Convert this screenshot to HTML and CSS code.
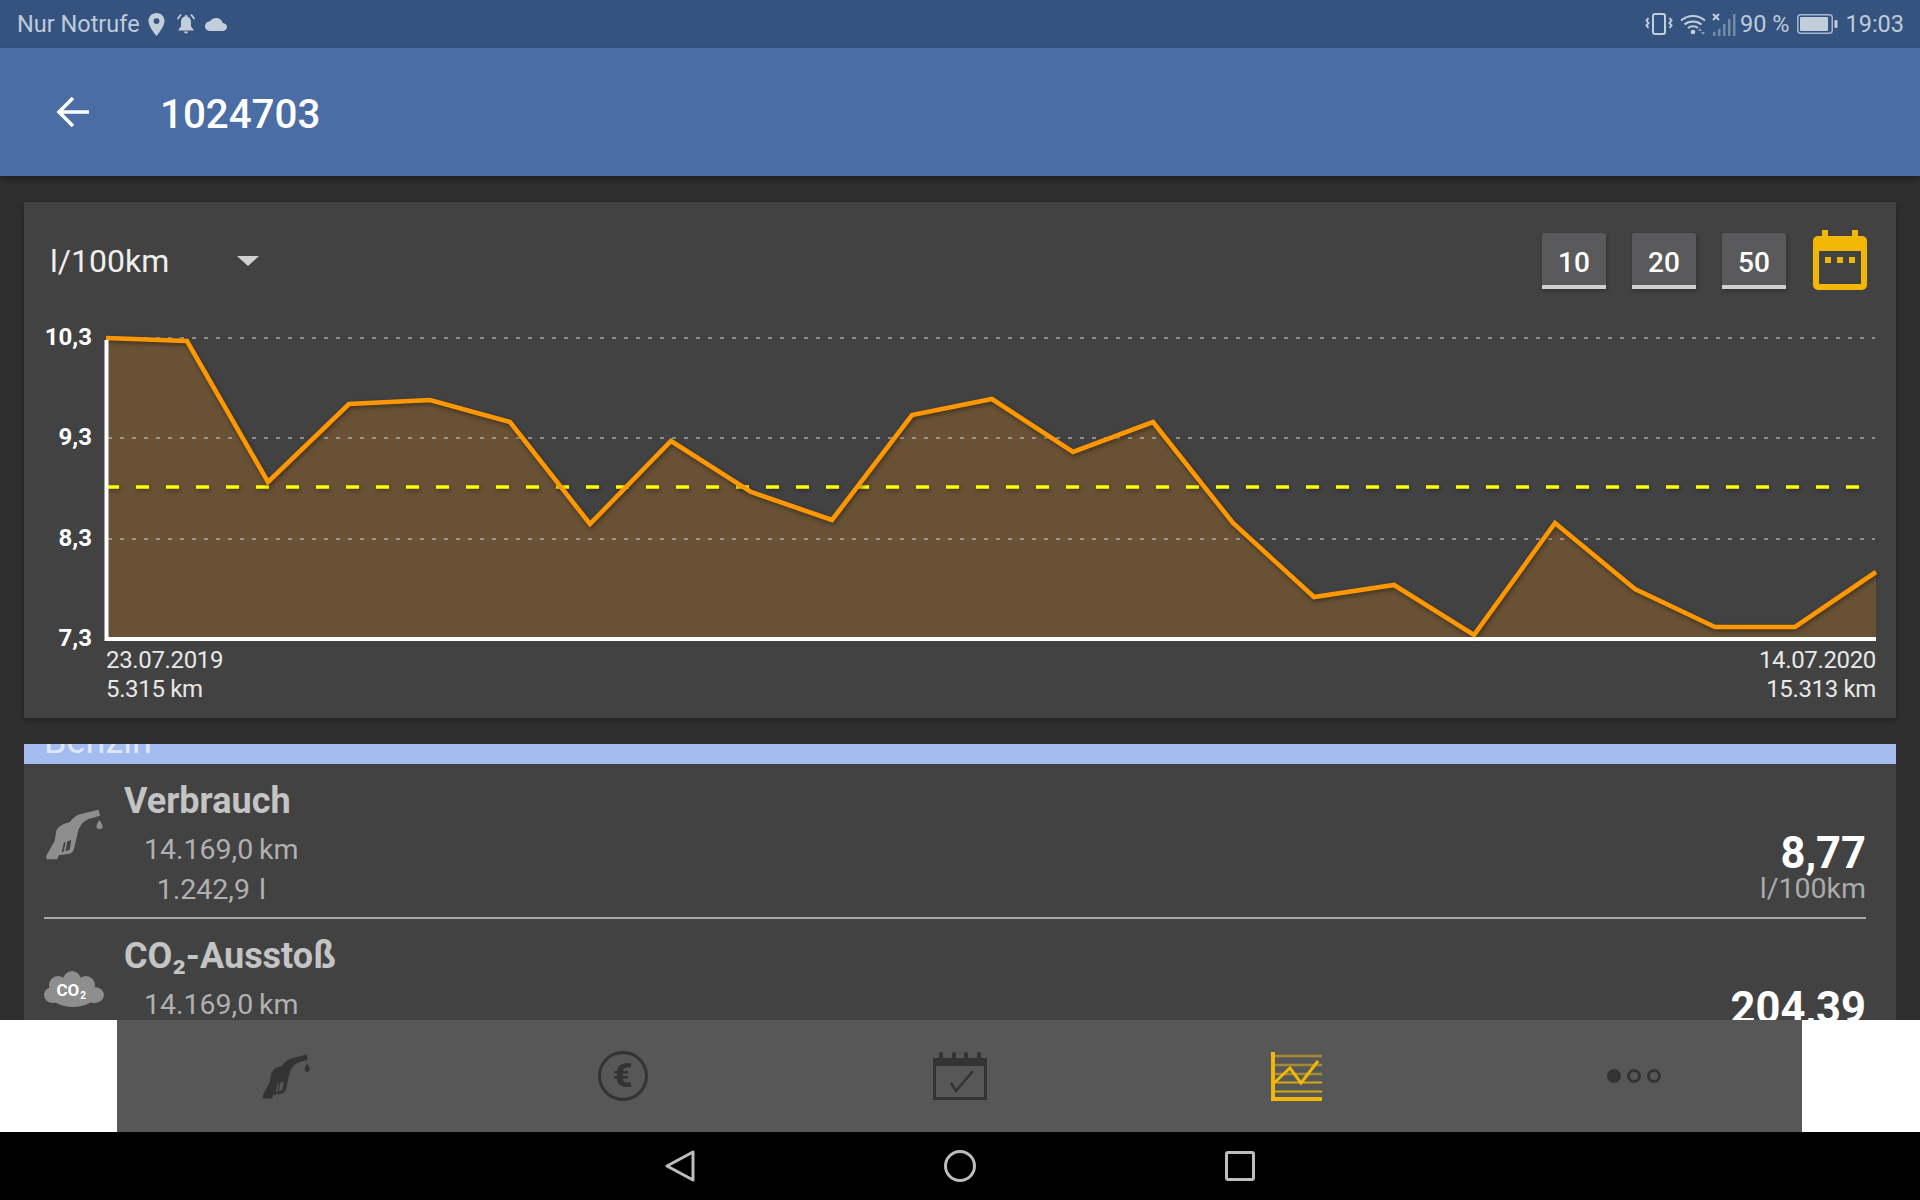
FILE: index.html
```html
<!DOCTYPE html>
<html lang="de">
<head>
<meta charset="utf-8">
<title>1024703</title>
<link rel="stylesheet" href="styles.css">
</head>
<body>
<div class="screen">
  <header class="status">
    <div class="status-side">
      <span class="status-text">Nur Notrufe</span>
      <svg class="ic-pin" viewBox="5 2 14 20"><path fill-rule="evenodd" d="M12 2C8.1 2 5 5.1 5 9c0 5.2 7 13 7 13s7-7.8 7-13c0-3.9-3.1-7-7-7zm0 9.5a2.5 2.5 0 1 1 0-5 2.5 2.5 0 0 1 0 5z"/></svg>
      <svg class="ic-bell" viewBox="0 0 22 22"><path d="M11 3.5c-3.6 0-5 2.8-5 5.5v4.5L3.6 16.600v1h14.800v-1L16 13.500V9c0-2.700-1.400-5.500-5-5.500z"/><circle cx="11" cy="3.500" r="1.400"/><path d="M9 18.500h4a2 2 0 0 1-4 0z"/><path class="ic-arc" d="M6 1.500 2.500 6M16 1.500 19.500 6"/></svg>
      <svg class="ic-cloud" viewBox="0 4 24 16" preserveAspectRatio="none"><path d="M19.350 10.040C18.670 6.590 15.640 4 12 4 9.110 4 6.600 5.640 5.350 8.040 2.340 8.360 0 10.910 0 14c0 3.310 2.690 6 6 6h13c2.760 0 5-2.240 5-5 0-2.640-2.050-4.780-4.650-4.960z"/></svg>
    </div>
    <div class="status-side">
      <svg class="ic-vib" viewBox="0 0 28 22"><rect class="ic-line" x="8" y="1" width="12" height="20" rx="2"/><path class="ic-line" d="M3.500 5 1.500 7.500l2 2.500-2 2.500 2 2.500M24.500 5l2 2.500-2 2.500 2 2.500-2 2.500"/></svg>
      <svg class="ic-wifi" viewBox="0 0 26 22"><path class="ic-line" d="M1 7.500c7-6 17-6 24 0M4.500 11.500c4.800-4 12.200-4 17 0M8 15c2.800-2.300 7.200-2.300 10 0"/><circle cx="13" cy="19" r="2.300"/><path d="m20 15 2 3h-4zM23 22l-2-3h4z" opacity=".6"/></svg>
      <svg class="ic-signal" viewBox="0 0 24 23"><path class="ic-x" d="m1 1 6 6M7 1 1 7"/><g class="ic-dim"><rect x="1" y="19" width="2.500" height="4"/><rect x="6" y="16" width="2.500" height="7"/><rect x="11" y="11" width="2.500" height="12"/><rect x="16" y="6" width="2.500" height="17"/><rect x="21" y="1" width="2.500" height="22"/></g></svg>
      <span class="status-text">90 %</span>
      <svg class="ic-batt" viewBox="0 0 41 20"><rect class="ic-batt-box" x=".75" y=".75" width="34.500" height="18.500" rx="3"/><rect x="3" y="3" width="28" height="14" rx="1"/><rect x="37.500" y="6" width="3" height="8" rx="1"/></svg>
      <span class="status-text">19:03</span>
    </div>
  </header>

  <div class="appbar">
    <svg class="ic-back" viewBox="0 0 33 32"><path d="M33 16H3M17 2 3 16l14 14"/></svg>
    <h1 class="title">1024703</h1>
  </div>

  <main class="content">
    <section class="card chart-card">
      <div class="toolbar">
        <div class="select"><span>l/100km</span><i class="caret"></i></div>
        <div class="actions">
          <button class="range">10</button>
          <button class="range">20</button>
          <button class="range">50</button>
          <svg class="ic-cal" viewBox="0 0 54 60"><path fill-rule="evenodd" d="M9 0h6v6h24V0h6v6h4a5 5 0 0 1 5 5v44a5 5 0 0 1-5 5H5a5 5 0 0 1-5-5V11a5 5 0 0 1 5-5h4zM6 21v33h42V21z"/><rect x="12" y="27" width="6" height="6"/><rect x="24" y="27" width="6" height="6"/><rect x="36" y="27" width="6" height="6"/></svg>
        </div>
      </div>
      <svg class="chart" viewBox="24 320 1872 324">
        <polygon class="area" points="106,338 187,341 268,482 349,404 430,400 510,422 590,524 671,441 751,492 832,520 912,415 992,399 1073,452 1153,422 1233,523 1314,597 1394,585 1474,635 1555,523 1635,589 1715,627 1795,627 1876,572 1876,638 106,638"/>
        <path class="grid" d="M108 338H1875M108 438H1875M108 539H1875"/>
        <path class="mean" d="M106 487H1862"/>
        <polyline class="line" points="106,338 187,341 268,482 349,404 430,400 510,422 590,524 671,441 751,492 832,520 912,415 992,399 1073,452 1153,422 1233,523 1314,597 1394,585 1474,635 1555,523 1635,589 1715,627 1795,627 1876,572"/>
        <path class="axis" d="M106.500 340V639H1876"/>
        <g class="ylabels">
          <text x="92" y="345">10,3</text>
          <text x="92" y="445">9,3</text>
          <text x="92" y="546">8,3</text>
          <text x="92" y="646">7,3</text>
        </g>
      </svg>
      <div class="range-labels">
        <div>23.07.2019<br>5.315 km</div>
        <div class="range-end">14.07.2020<br>15.313 km</div>
      </div>
    </section>

    <section class="group">
      <div class="group-head"><span>Benzin</span></div>
      <div class="card rows">
        <article class="row row-first">
          <div class="row-icon">
            <svg class="ic-pump" viewBox="130 262 180 156"><path fill-rule="evenodd" d="M294 267l4 18-34 10q-18 6-30 30l-14 60q-4 13-18 15l-28 4-4 12h-33v-11l25-45 5-30q10-20 40-25 15-20 31-24zM190 365l-7 30 6-2 6-28zM200 362l-6 30 13-4 5-30zM296 298q12 17 10 22a10 10 0 0 1-19-2q0-6 9-20z"/></svg>
          </div>
          <div class="row-main">
            <h2 class="row-title">Verbrauch</h2>
            <div class="pairs">
              <span class="num">14.169,0</span><span>km</span>
              <span class="num">1.242,9</span><span>l</span>
            </div>
          </div>
          <div class="row-value"><strong>8,77</strong><span>l/100km</span></div>
        </article>
        <hr class="divider">
        <article class="row">
          <div class="row-icon">
            <svg class="ic-co2" viewBox="0 0 60 36"><circle cx="28" cy="9" r="9"/><circle cx="14" cy="14" r="9"/><circle cx="42" cy="14" r="9"/><ellipse cx="9" cy="24" rx="9" ry="8"/><ellipse cx="50" cy="24" rx="10" ry="8"/><ellipse cx="29" cy="24" rx="22" ry="12"/><text class="co2-text" x="12.500" y="25">CO<tspan class="co2-sub" dx="1" dy="3">2</tspan></text></svg>
          </div>
          <div class="row-main">
            <h2 class="row-title">CO₂-Ausstoß</h2>
            <div class="pairs">
              <span class="num">14.169,0</span><span>km</span>
            </div>
          </div>
          <div class="row-value"><strong>204,39</strong></div>
        </article>
      </div>
    </section>
  </main>

  <nav class="tabs">
    <div class="tabs-inner">
      <div class="tab">
        <svg class="tab-pump" viewBox="130 262 180 156" preserveAspectRatio="none"><path fill-rule="evenodd" d="M294 267l4 18-34 10q-18 6-30 30l-14 60q-4 13-18 15l-28 4-4 12h-33v-11l25-45 5-30q10-20 40-25 15-20 31-24zM190 365l-7 30 6-2 6-28zM200 362l-6 30 13-4 5-30zM296 298q12 17 10 22a10 10 0 0 1-19-2q0-6 9-20z"/></svg>
      </div>
      <div class="tab">
        <div class="euro">€</div>
      </div>
      <div class="tab">
        <svg class="tab-cal" viewBox="0 0 54 48"><path class="cal-fill" d="M0 6h54v8H0z"/><path class="cal-rings" d="M8 2v7M21 2v7M33 2v7M46 2v7"/><path class="cal-box" d="M1.500 12v34.500h51V12"/><path class="cal-check" d="M18 31l5 8 17-20"/></svg>
      </div>
      <div class="tab">
        <svg class="tab-chart" viewBox="0 0 51 49"><path class="tc-grid" d="M3 4H51M3 13H51M3 22H51"/><path class="tc-grid2" d="M3 30.500H51M3 39.500H51"/><path class="tc-bold" d="M2 0V49M2 47H51"/><path class="tc-line" d="M3 31 19 16l11 15 17-22"/></svg>
      </div>
      <div class="tab">
        <div class="dots"><i class="dot on"></i><i class="dot"></i><i class="dot"></i></div>
      </div>
    </div>
  </nav>

  <footer class="sysnav">
    <div class="sys"><svg class="sys-ic" width="30" height="32" viewBox="0 0 30 32"><path d="M28 2v28L2 16z"/></svg></div>
    <div class="sys"><svg class="sys-ic" width="32" height="32" viewBox="0 0 32 32"><circle cx="16" cy="16" r="14.500"/></svg></div>
    <div class="sys"><svg class="sys-ic" width="30" height="30" viewBox="0 0 30 30"><rect x="1.500" y="1.500" width="27" height="27" rx="1.500"/></svg></div>
  </footer>
</div>
</body>
</html>
```

FILE: styles.css
```css
* { box-sizing: border-box; }
html, body { margin: 0; padding: 0; background: #000; }
body { font-family: Roboto, "Liberation Sans", sans-serif; }
.screen { width: 1920px; height: 1200px; display: flex; flex-direction: column; overflow: hidden; }

/* status bar */
.status { height: 48px; flex: none; background: #34537f; display: flex; justify-content: space-between; align-items: center; padding: 0 16px 0 17px; color: #bfcbdb; }
.status-side { display: flex; align-items: center; }
.status-text { font-size: 23.500px; line-height: 28px; }
.status svg { fill: #c3cedd; display: block; }
.ic-pin { width: 17px; height: 23px; margin-left: 8px; }
.ic-bell { width: 22px; height: 22px; margin-left: 10px; }
.ic-arc { fill: none; stroke: #c3cedd; stroke-width: 1.800; }
.ic-cloud { width: 22px; height: 13px; margin-left: 8px; }
.ic-line { fill: none; stroke: #c3cedd; stroke-width: 2; }
.ic-vib { width: 28px; height: 22px; }
.ic-wifi { width: 26px; height: 22px; margin-left: 7px; }
.ic-signal { width: 24px; height: 23px; margin-left: 6px; }
.ic-x { fill: none; stroke: #c3cedd; stroke-width: 2; }
.ic-dim { opacity: .45; }
.ic-signal + .status-text { margin-left: 4px; }
.ic-batt { width: 41px; height: 20px; margin: 0 7px 0 8px; }
.ic-batt-box { fill: none; stroke: #a9b8cd; stroke-width: 1.500; }

/* app bar */
.appbar { height: 128px; flex: none; background: #4a6da5; display: flex; align-items: center; padding-left: 56px; box-shadow: 0 3px 6px rgba(0, 0, 0, .35); position: relative; z-index: 2; }
.ic-back { width: 33px; height: 32px; fill: none; stroke: #fff; stroke-width: 3.500; display: block; }
.title { margin: 5px 0 0 71px; font-size: 40.300px; font-weight: 500; color: #fff; line-height: 48px; }

/* content */
.content { flex: 1; min-height: 0; overflow: hidden; background: #2f2f2f; padding: 26px 24px 0; display: flex; flex-direction: column; gap: 26px; }
.card { background: #424242; }
.chart-card { height: 516px; flex: none; box-shadow: 0 2px 5px rgba(0, 0, 0, .3); }
.toolbar { height: 118px; display: flex; align-items: center; justify-content: space-between; padding: 0 29px 0 26px; }
.select { display: flex; align-items: center; font-size: 32px; color: #efefef; }
.caret { width: 0; height: 0; border-left: 11px solid transparent; border-right: 11px solid transparent; border-top: 10px solid #d0d0d0; margin-left: 68px; }
.actions { display: flex; align-items: center; gap: 26px; }
.range { width: 64px; height: 56px; border: 0; border-bottom: 4px solid #cfcfcf; border-radius: 3px 3px 0 0; background: #5a5a5c; color: #fff; font: 500 28px Roboto, sans-serif; padding: 6px 0 0; box-shadow: 1px 2px 4px rgba(0, 0, 0, .25); }
.ic-cal { width: 54px; height: 60px; fill: #f2b705; display: block; margin: -2px 0 0 1px; }

.chart { display: block; width: 1872px; height: 324px; overflow: visible; }
.area { fill: #685135; }
.grid { fill: none; stroke: #a8a8a8; stroke-opacity: .75; stroke-width: 2; stroke-dasharray: 4 8; }
.mean { fill: none; stroke: #ffff00; stroke-width: 3.500; stroke-dasharray: 13 17; filter: drop-shadow(1px 2px 2px rgba(0, 0, 0, .35)); }
.line { fill: none; stroke: #ff9800; stroke-width: 4.600; stroke-linejoin: miter; filter: drop-shadow(1px 2px 2px rgba(0, 0, 0, .4)); }
.axis { fill: none; stroke: #fff; stroke-width: 4; }
.ylabels text { fill: #fff; font: 700 24px Roboto, sans-serif; text-anchor: end; }
.range-labels { display: flex; justify-content: space-between; padding: 0 20px 0 82px; font-size: 24px; letter-spacing: -.35px; line-height: 29px; color: #e8e8e8; margin-top: 2px; }
.range-end { text-align: right; }

/* stats */
.group { flex: none; }
.group-head { height: 20px; overflow: hidden; background: #a4bcef; padding-left: 20px; }
.group-head span { display: block; margin-top: -28px; font-size: 36px; line-height: 50px; color: #dfe8fb; }
.rows { padding: 0 30px 0 20px; }
.row { height: 153px; display: flex; align-items: flex-start; }
.row-icon { width: 60px; height: 140px; flex: none; display: flex; align-items: center; }
.ic-pump { width: 60px; height: 52px; fill: #8e8e8e; display: block; }
.ic-co2 { width: 60px; height: 36px; fill: #8e8e8e; display: block; }
.co2-text { fill: #fff; font: 700 17px Roboto, sans-serif; }
.co2-sub { font-size: 10px; }
.row-main { margin-left: 20px; flex: 1; padding-top: 16px; }
.row-title { margin: 0; font-size: 36px; line-height: 42px; font-weight: 700; color: #c4c4c4; }
.pairs { display: grid; grid-template-columns: 106px auto; justify-content: start; column-gap: 9px; margin: 8px 0 0 20px; font-size: 28.500px; line-height: 40px; color: #b0b0b0; }
.num { text-align: right; }
.row-value { display: flex; flex-direction: column; align-items: flex-end; padding-top: 70px; }
.row-value strong { font-size: 43.500px; line-height: 40px; font-weight: 700; color: #fff; }
.row-value span { font-size: 28.500px; line-height: 30px; color: #aaa; }
.divider { height: 2px; margin: 0; border: 0; background: #a8a8a8; }

/* bottom tabs */
.tabs { height: 112px; flex: none; background: #fff; padding: 0 118px 0 117px; position: relative; z-index: 2; }
.tabs-inner { height: 100%; background: #575757; display: flex; }
.tab { flex: 1; display: flex; align-items: center; justify-content: center; }
.tab-pump { width: 50px; height: 46px; fill: #333; display: block; }
.euro { width: 50px; height: 50px; border: 3.500px solid #333; border-radius: 50%; color: #333; font-size: 34px; font-weight: 900; line-height: 43px; text-align: center; }
.tab-cal { width: 54px; height: 48px; display: block; }
.cal-fill { fill: #333; }
.cal-rings { fill: none; stroke: #333; stroke-width: 4; stroke-linecap: round; }
.cal-box { fill: none; stroke: #333; stroke-width: 3; }
.cal-check { fill: none; stroke: #333; stroke-width: 2.500; }
.tab-chart { width: 51px; height: 49px; display: block; fill: none; }
.tc-grid { stroke: #a58a35; stroke-width: 2.500; }
.tc-grid2 { stroke: #d5a815; stroke-width: 2; }
.tc-bold { stroke: #f2b705; stroke-width: 4; }
.tc-line { stroke: #f2b705; stroke-width: 3; }
.dots { display: flex; gap: 6px; }
.dot { width: 14px; height: 14px; border: 3px solid #333; border-radius: 50%; }
.dot.on { background: #333; }

/* system navigation */
.sysnav { height: 68px; flex: none; background: #000; display: flex; justify-content: center; }
.sys { width: 280px; display: flex; align-items: center; justify-content: center; }
.sys-ic { fill: none; stroke: #bdbdbd; stroke-width: 3; stroke-linejoin: round; display: block; }
```
